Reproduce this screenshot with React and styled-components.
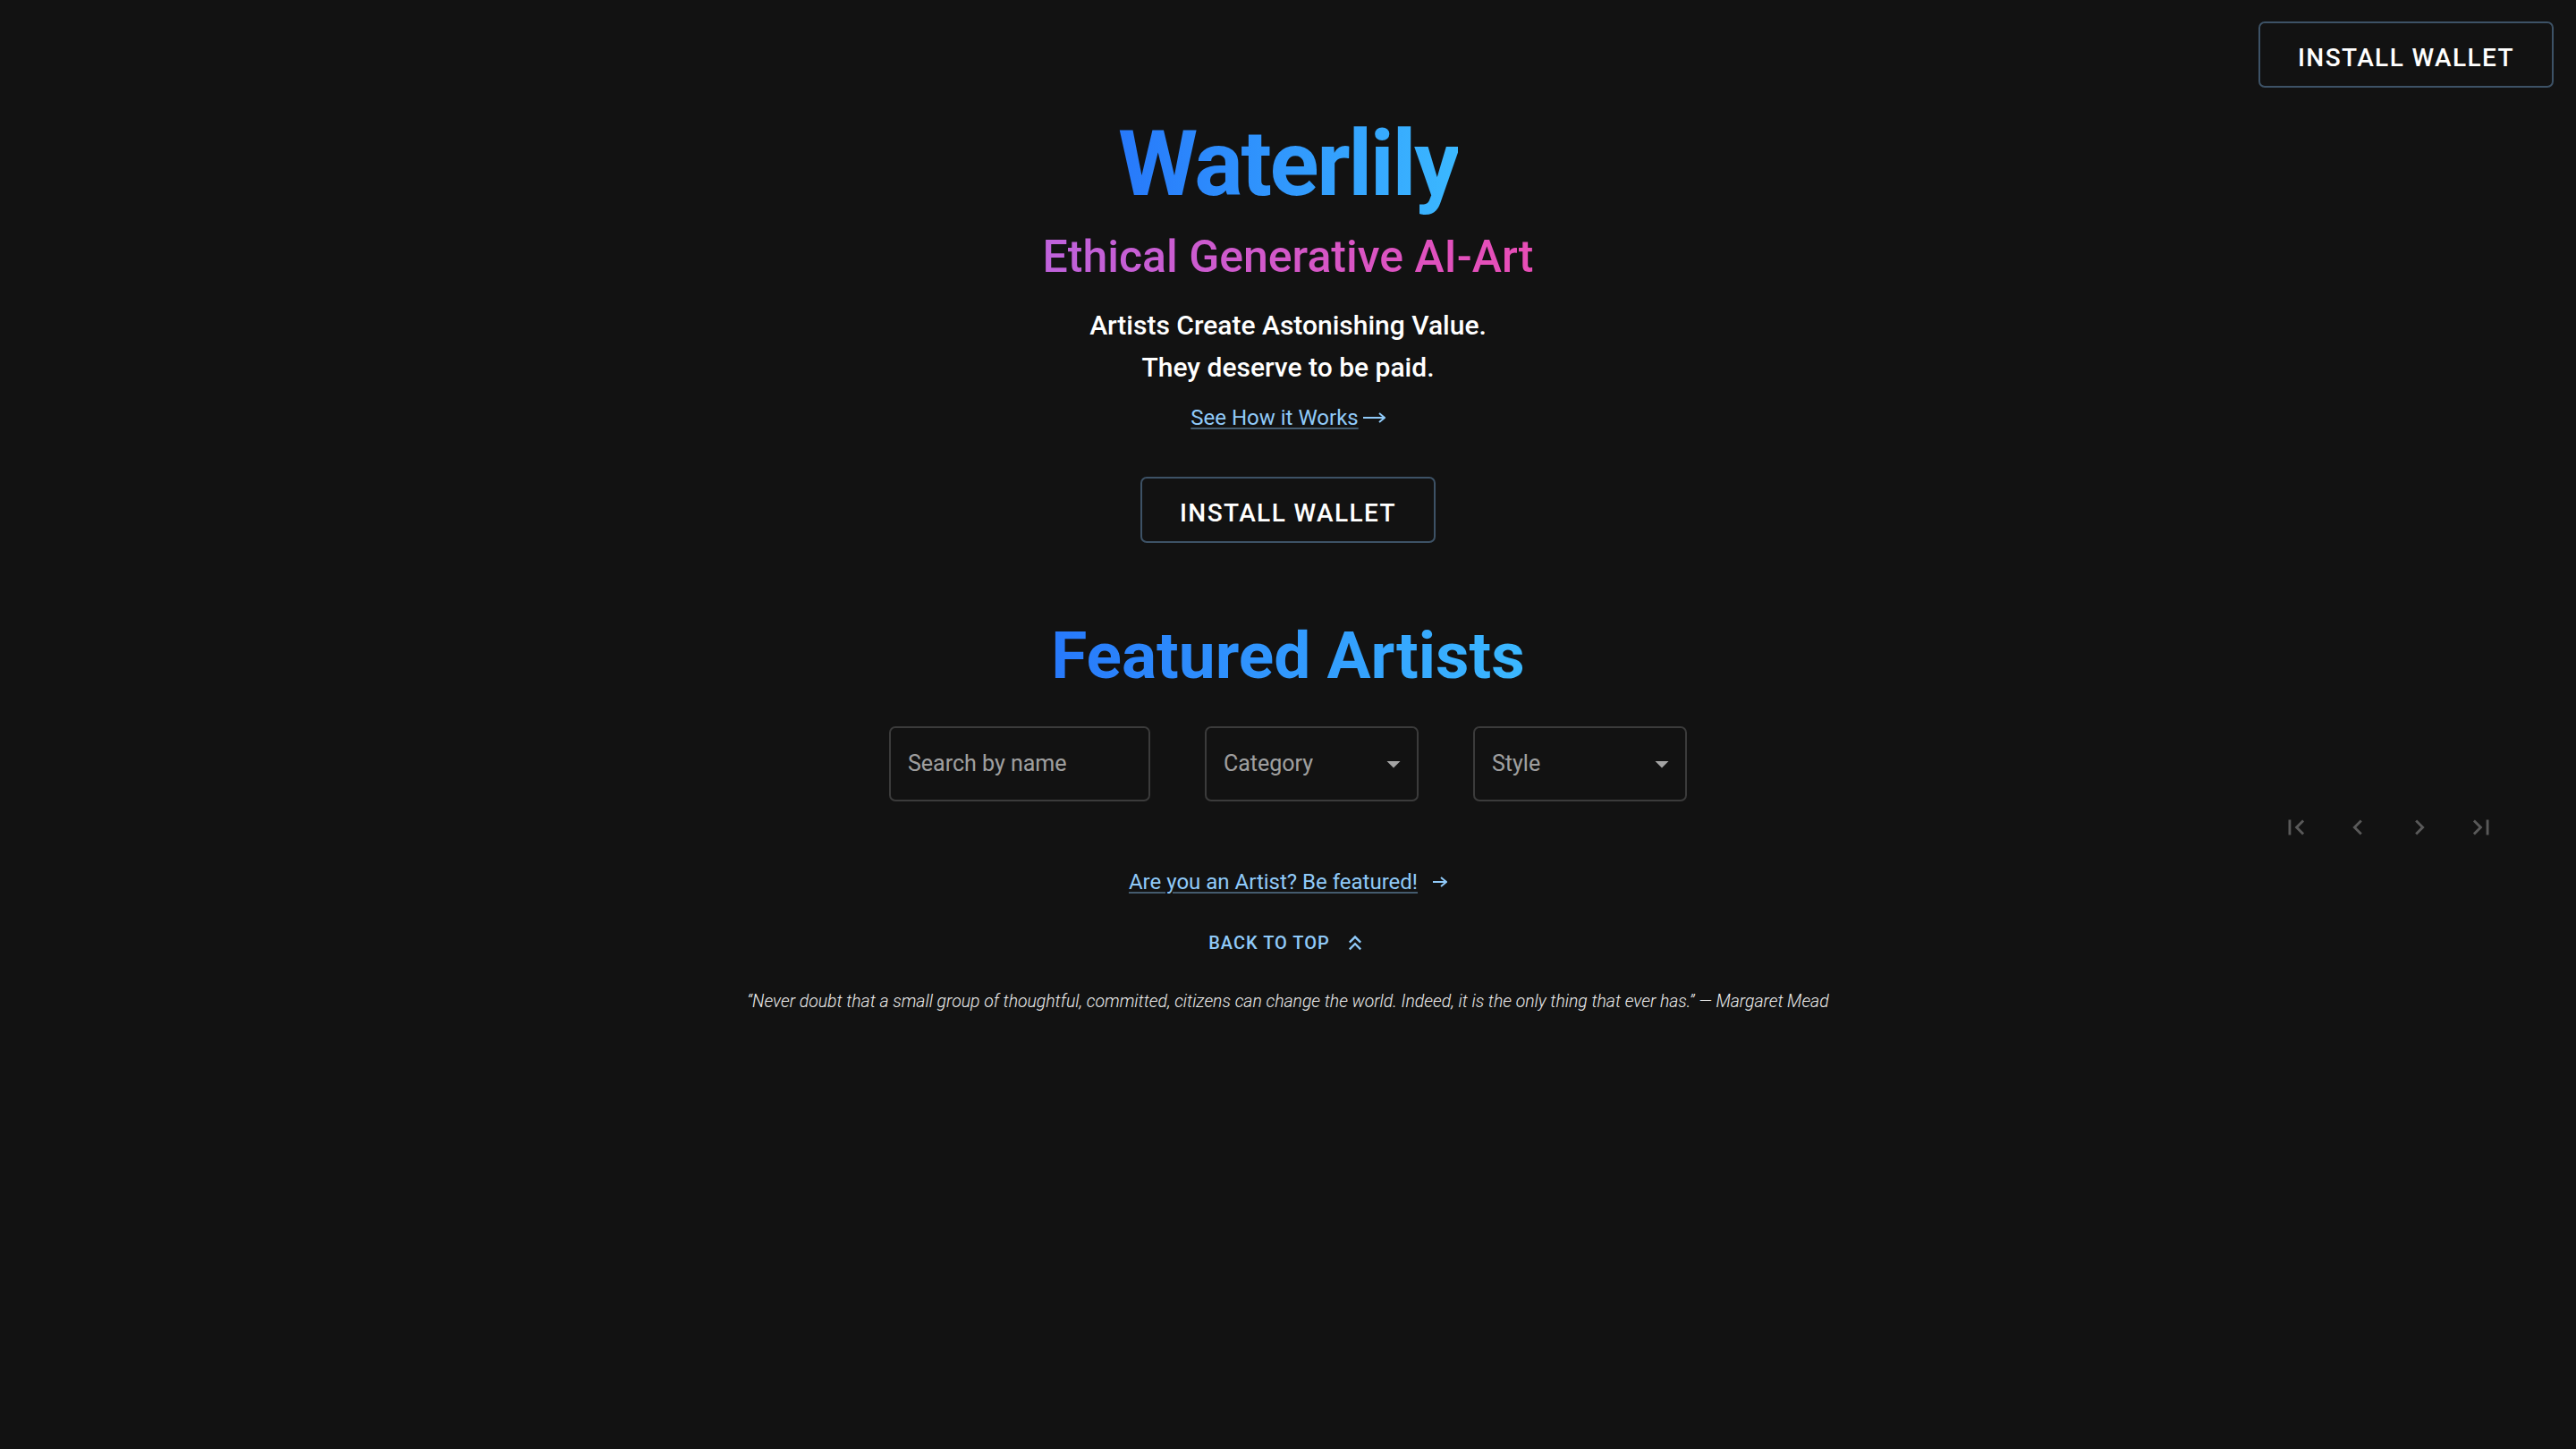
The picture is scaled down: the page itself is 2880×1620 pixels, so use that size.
import React from 'react';
import styled, { createGlobalStyle } from 'styled-components';

const GlobalStyle = createGlobalStyle`
  html, body {
    margin: 0;
    padding: 0;
    background: #121212;
    font-family: Roboto, 'Liberation Sans', sans-serif;
    color: #fff;
  }
  * { box-sizing: border-box; }
`;

const linkBlue = '#90caf9';
const underlineBlue = 'rgba(144, 202, 249, 0.4)';

const TopBar = styled.div`
  display: flex;
  justify-content: flex-end;
  padding: 24px 25px 0;
`;

const OutlinedButton = styled.button`
  width: 330px;
  height: 74px;
  display: flex;
  align-items: center;
  justify-content: center;
  padding: 7px 0 0;
  background: transparent;
  border: 2px solid #3d5266;
  border-radius: 7px;
  color: #fff;
  font-family: Roboto, sans-serif;
  font-weight: 500;
  font-size: 28px;
  letter-spacing: 1.4px;
  text-transform: uppercase;
  cursor: pointer;
  margin: ${(p) => p.$margin || '0'};
`;

const Hero = styled.main`
  display: flex;
  flex-direction: column;
  align-items: center;
  text-align: center;
  margin-top: 24px;
`;

const Title = styled.h1`
  margin: 0;
  font-size: ${(p) => p.$size}px;
  letter-spacing: ${(p) => p.$spacing || 0}px;
  line-height: 1.2;
  font-weight: 700;
  background: linear-gradient(90deg, #2779fb, #3bb8ff);
  -webkit-background-clip: text;
  background-clip: text;
  color: transparent;
  margin-top: ${(p) => p.$top || 0}px;
`;

const Tagline = styled.h2`
  margin: 13px 0 0;
  font-size: 50px;
  line-height: 60px;
  font-weight: 500;
  background: linear-gradient(90deg, #bf62db, #e84db6);
  -webkit-background-clip: text;
  background-clip: text;
  color: transparent;
`;

const Pitch = styled.p`
  margin: 23px 0 0;
  font-size: 30px;
  line-height: 47px;
  font-weight: 500;
  color: #fff;
`;

const LinkRow = styled.div`
  display: flex;
  align-items: center;
  gap: ${(p) => p.$gap}px;
  margin-top: ${(p) => p.$top}px;
  font-size: 24px;
  line-height: 36px;
  color: ${linkBlue};
`;

const TextLink = styled.a`
  color: ${linkBlue};
  text-decoration: underline;
  text-decoration-color: ${underlineBlue};
  text-decoration-thickness: 2px;
  text-underline-offset: 3px;
  cursor: pointer;
`;

const Filters = styled.div`
  display: flex;
  gap: 61px;
  margin-top: 34px;
`;

const Field = styled.div`
  width: ${(p) => p.$w}px;
  height: 84px;
  border: 2px solid #3b3b3b;
  border-radius: 7px;
  display: flex;
  align-items: center;
  justify-content: space-between;
  padding: 0 8px 0 19px;
  font-size: 25px;
  color: rgba(255, 255, 255, 0.62);
  text-align: left;
`;

const Pager = styled.div`
  align-self: stretch;
  display: flex;
  justify-content: flex-end;
  padding-right: 72px;
  margin-top: 12px;
`;

const PagerButton = styled.button`
  width: 69px;
  height: 34px;
  display: flex;
  align-items: center;
  justify-content: center;
  background: transparent;
  border: none;
  padding: 0;
  color: rgba(255, 255, 255, 0.3);
`;

const BackToTop = styled.button`
  display: flex;
  align-items: center;
  gap: 14px;
  margin-top: 33px;
  background: transparent;
  border: none;
  padding: 0 8px;
  height: 35px;
  color: ${linkBlue};
  font-family: Roboto, sans-serif;
  font-size: 20px;
  font-weight: 500;
  letter-spacing: 1px;
  text-transform: uppercase;
`;

const Quote = styled.p`
  margin: 34px 0 0;
  font-size: 19.4px;
  line-height: 27px;
  font-style: italic;
  font-weight: 300;
  color: #ececec;
`;

const MuiIcon = ({ d, size }) => (
  <svg width={size} height={size} viewBox="0 0 24 24" fill="currentColor">
    <path d={d} />
  </svg>
);

const icons = {
  first: 'M18.41 16.59 13.82 12l4.59-4.59L17 6l-6 6 6 6zM6 6h2v12H6z',
  prev: 'M15.41 7.41 14 6l-6 6 6 6 1.41-1.41L10.83 12z',
  next: 'M10 6 8.59 7.41 13.17 12l-4.58 4.59L10 18l6-6z',
  last: 'M5.59 7.41 10.18 12l-4.59 4.59L7 18l6-6-6-6zM16 6h2v12h-2z',
  drop: 'M7 10l5 5 5-5z',
  doubleUp: 'M6 17.59 7.41 19 12 14.42 16.59 19 18 17.59l-6-6zM6 11l1.41 1.41L12 7.83l4.59 4.58L18 11l-6-6z',
};

const LongArrow = ({ width }) => (
  <svg width={width} height="12" viewBox={`0 0 ${width} 12`} fill="none" stroke="currentColor" strokeWidth="2">
    <path d={`M0 6H${width - 1}M${width - 7} 1l6 5-6 5`} />
  </svg>
);

const App = () => {
  return (
    <>
      <GlobalStyle />
      <TopBar>
        <OutlinedButton>Install Wallet</OutlinedButton>
      </TopBar>
      <Hero>
        <Title $size={102} $spacing={-2.4}>Waterlily</Title>
        <Tagline>Ethical Generative AI-Art</Tagline>
        <Pitch>
          Artists Create Astonishing Value.
          <br />
          They deserve to be paid.
        </Pitch>
        <LinkRow $gap={5} $top={15}>
          <TextLink>See How it Works</TextLink>
          <LongArrow width={25} />
        </LinkRow>
        <OutlinedButton $margin="48px 0 0">Install Wallet</OutlinedButton>

        <Title $size={73} $top={83}>Featured Artists</Title>
        <Filters>
          <Field $w={292}>Search by name</Field>
          <Field $w={239}>
            Category
            <MuiIcon d={icons.drop} size={36} />
          </Field>
          <Field $w={239}>
            Style
            <MuiIcon d={icons.drop} size={36} />
          </Field>
        </Filters>
        <Pager>
          {['first', 'prev', 'next', 'last'].map((k) => (
            <PagerButton key={k}>
              <MuiIcon d={icons[k]} size={34} />
            </PagerButton>
          ))}
        </Pager>

        <LinkRow $gap={17} $top={26}>
          <TextLink>Are you an Artist? Be featured!</TextLink>
          <LongArrow width={16} />
        </LinkRow>
        <BackToTop>
          Back to top
          <MuiIcon d={icons.doubleUp} size={28} />
        </BackToTop>
        <Quote>
          “Never doubt that a small group of thoughtful, committed, citizens can change the world. Indeed, it is the only
          thing that ever has.” — Margaret Mead
        </Quote>
      </Hero>
    </>
  );
};

export default App;
